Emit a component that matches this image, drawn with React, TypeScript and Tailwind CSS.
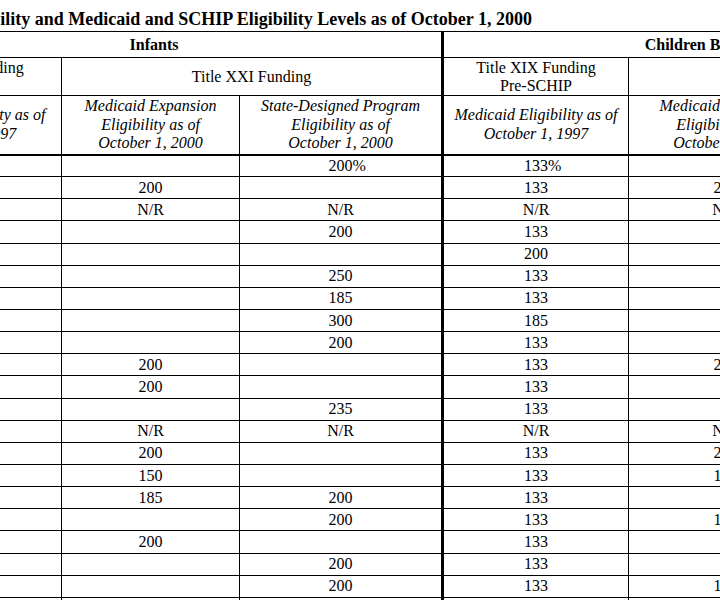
import React from 'react';

type Row = [string, string, string, string];

// infants XXI medicaid, infants XXI state, children XIX, children XXI medicaid
const rows: Row[] = [
  ['', '200%', '133%', ''],
  ['200', '', '133', '200'],
  ['N/R', 'N/R', 'N/R', 'N/R'],
  ['', '200', '133', ''],
  ['', '', '200', ''],
  ['', '250', '133', ''],
  ['', '185', '133', ''],
  ['', '300', '185', ''],
  ['', '200', '133', ''],
  ['200', '', '133', '200'],
  ['200', '', '133', ''],
  ['', '235', '133', ''],
  ['N/R', 'N/R', 'N/R', 'N/R'],
  ['200', '', '133', '200'],
  ['150', '', '133', '150'],
  ['185', '200', '133', ''],
  ['', '200', '133', '185'],
  ['200', '', '133', ''],
  ['', '200', '133', ''],
  ['', '200', '133', '185'],
  ['', '', '', ''],
];

const Val: React.FC<{ v: string }> = ({ v }) => {
  if (v.endsWith('%')) {
    return (
      <span className="relative">
        {v.slice(0, -1)}
        <span className="absolute left-full top-0">%</span>
      </span>
    );
  }
  return <>{v}</>;
};

const cell = 'border border-black p-0 text-center align-middle';
const thick = 'border-l-[3px]';

const App: React.FC = () => {
  return (
    <div className="w-[720px] h-[600px] overflow-hidden bg-white text-black font-['Liberation_Serif',serif]">
      <div className="h-[31px] pt-[9px] w-[532px] flex justify-end">
        <div className="whitespace-nowrap font-bold text-[18px] leading-[20px]">
          Table 1: Pre-SCHIP Medicaid Eligibility and Medicaid and SCHIP Eligibility Levels as of October 1, 2000
        </div>
      </div>
      <table className="ml-[-134px] w-[1192px] table-fixed border-collapse text-[16px] leading-[18px]">
        <colgroup>
          <col className="w-[195px]" />
          <col className="w-[178px]" />
          <col className="w-[203px]" />
          <col className="w-[186px]" />
          <col className="w-[194px]" />
          <col className="w-[236px]" />
        </colgroup>
        <thead>
          <tr className="h-[26px] font-bold">
            <th colSpan={3} className={cell}>Infants</th>
            <th colSpan={3} className={`${cell} ${thick}`}>Children Between Ages 1 and 5</th>
          </tr>
          <tr className="h-[38px] font-normal">
            <th className={`${cell} font-normal`}>Title XIX Funding<br />Pre-SCHIP</th>
            <th colSpan={2} className={`${cell} font-normal`}>Title XXI Funding</th>
            <th className={`${cell} ${thick} font-normal`}>Title XIX Funding<br />Pre-SCHIP</th>
            <th colSpan={2} className={`${cell} font-normal`}>Title XXI Funding</th>
          </tr>
          <tr className="h-[59px] italic leading-[18.3px]">
            <th className={`${cell} border-b-2 font-normal`}>Medicaid Eligibility as of<br />October 1, 1997</th>
            <th className={`${cell} border-b-2 font-normal`}>Medicaid Expansion<br />Eligibility as of<br />October 1, 2000</th>
            <th className={`${cell} border-b-2 font-normal`}>State-Designed Program<br />Eligibility as of<br />October 1, 2000</th>
            <th className={`${cell} ${thick} border-b-2 font-normal`}>Medicaid Eligibility as of<br />October 1, 1997</th>
            <th className={`${cell} border-b-2 font-normal`}>Medicaid Expansion<br />Eligibility as of<br />October 1, 2000</th>
            <th className={`${cell} border-b-2 font-normal`}>State-Designed Program<br />Eligibility as of<br />October 1, 2000</th>
          </tr>
        </thead>
        <tbody>
          {rows.map((r, i) => (
            <tr key={i} className="h-[22.15px]">
              <td className={cell}></td>
              <td className={cell}><Val v={r[0]} /></td>
              <td className={cell}><Val v={r[1]} /></td>
              <td className={`${cell} ${thick}`}><Val v={r[2]} /></td>
              <td className={cell}><Val v={r[3]} /></td>
              <td className={cell}></td>
            </tr>
          ))}
        </tbody>
      </table>
    </div>
  );
};

export default App;
